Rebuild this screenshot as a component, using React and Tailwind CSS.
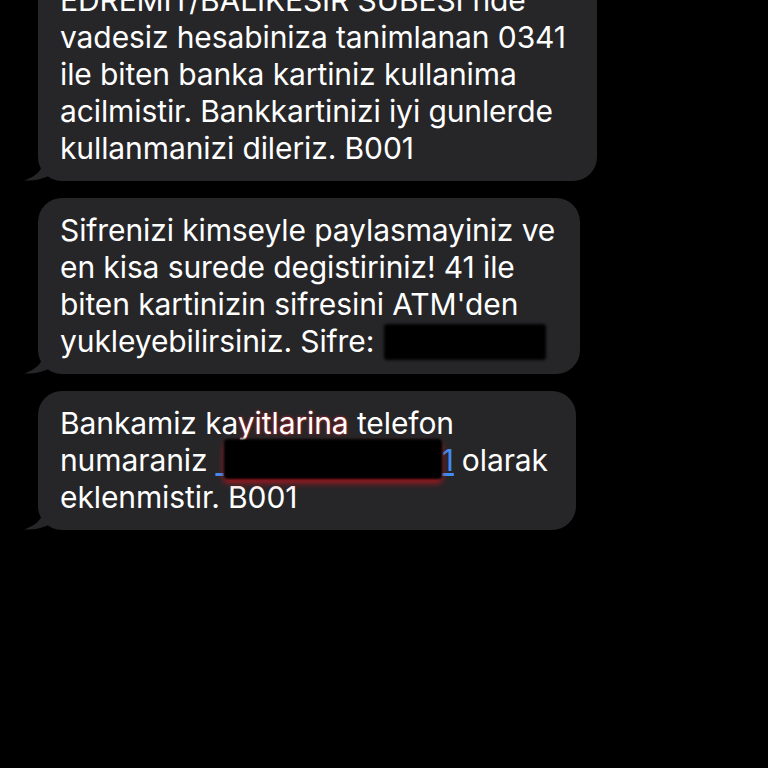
import React from "react";

const font = { fontFamily: "Inter, 'Liberation Sans', sans-serif" };

function Tail() {
  return (
    <svg
      className="absolute -left-[14px] bottom-0"
      width="34"
      height="26"
      viewBox="0 0 34 26"
    >
      <path
        d="M20 0 C20 12 16 20 0 25.5 C10 26 20 24 28 19 L34 26 L34 0 Z"
        fill="#262628"
      />
    </svg>
  );
}

function Bubble({ width, className = "", children }) {
  return (
    <div
      className={`relative rounded-[24px] bg-[#262628] pl-[22px] pr-4 py-[14px] ${className}`}
      style={{ width }}
    >
      <Tail />
      <div className="relative text-[30px] leading-[37px] text-white tracking-[-0.1px] whitespace-nowrap">
        {children}
      </div>
    </div>
  );
}

export default function App() {
  return (
    <div className="h-[768px] w-[768px] overflow-hidden bg-black pl-[38px]" style={font}>
      <div className="flex flex-col gap-[17px] -mt-[32px]">
        <Bubble width={559}>
          <div>EDREMIT/BALIKESIR SUBESI'nde</div>
          <div>vadesiz hesabiniza tanimlanan 0341</div>
          <div>ile biten banka kartiniz kullanima</div>
          <div>acilmistir. Bankkartinizi iyi gunlerde</div>
          <div>kullanmanizi dileriz. B001</div>
        </Bubble>
        <Bubble width={542}>
          <div>Sifrenizi kimseyle paylasmayiniz ve</div>
          <div>en kisa surede degistiriniz! 41 ile</div>
          <div>biten kartinizin sifresini ATM'den</div>
          <div className="flex items-center">
            <span>yukleyebilirsiniz. Sifre:</span>
            <span className="ml-[10px] inline-block h-[36px] w-[162px] rounded-[3px] bg-black blur-[1.5px]" />
          </div>
        </Bubble>
        <Bubble width={538}>
          <div>
            Bankamiz ka
            <span className="[text-shadow:0_0_3px_#e0222a]">yitlarina</span> telefon
          </div>
          <div className="flex items-center">
            <span>numaraniz</span>
            <span className="ml-[8px] flex items-center text-[#3f8ef5]">
              <span className="underline">&nbsp;</span>
              <span className="relative -mt-1 inline-block h-[40px] w-[218px] rounded-[4px] bg-black blur-[1px] shadow-[0_4px_6px_rgba(200,20,30,0.8)]" />
              <span className="underline">1</span>
            </span>
            <span className="ml-[8px]">olarak</span>
          </div>
          <div>eklenmistir. B001</div>
        </Bubble>
      </div>
    </div>
  );
}
